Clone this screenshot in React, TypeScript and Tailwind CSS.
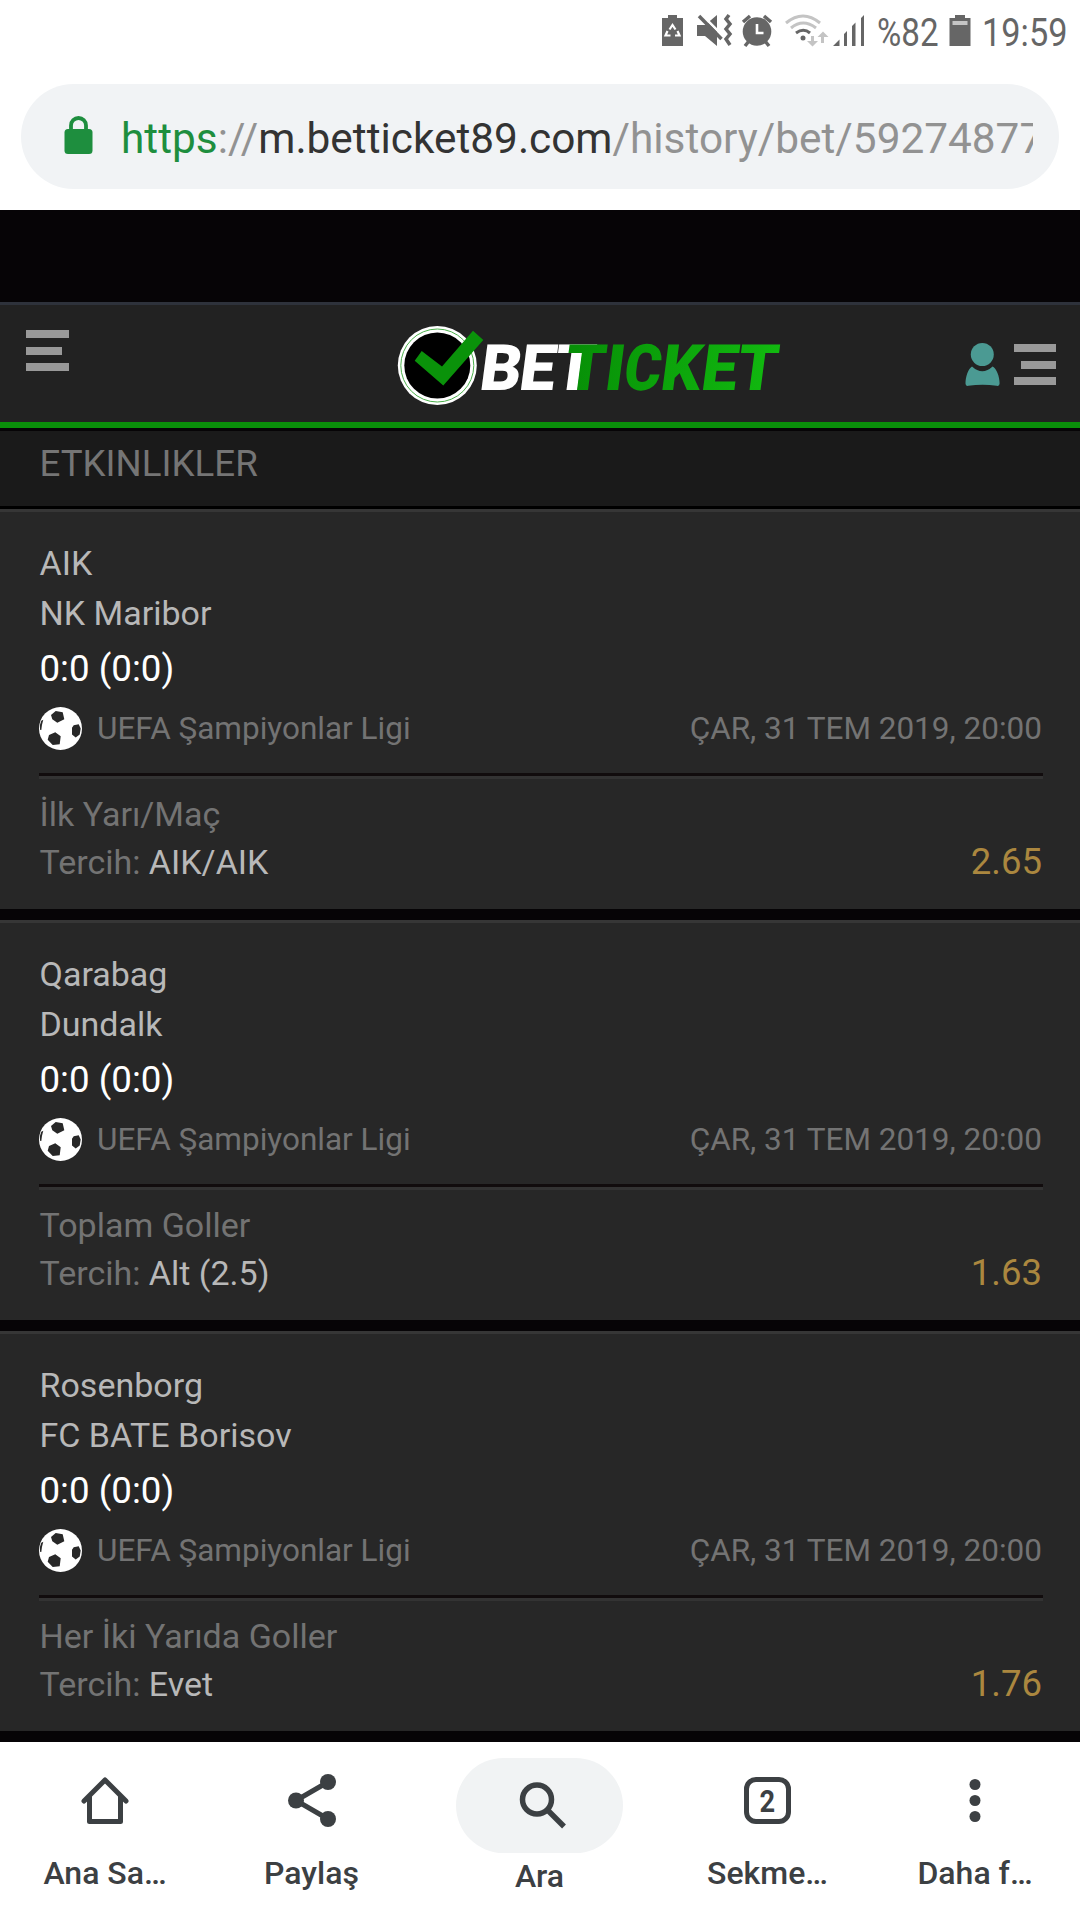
import type { ReactNode } from "react"

type Bet = {
  home: string
  away: string
  score: string
  market: string
  pick: string
  odds: string
}

const bets: Bet[] = [
  { home: "AIK", away: "NK Maribor", score: "0:0 (0:0)", market: "İlk Yarı/Maç", pick: "AIK/AIK", odds: "2.65" },
  { home: "Qarabag", away: "Dundalk", score: "0:0 (0:0)", market: "Toplam Goller", pick: "Alt (2.5)", odds: "1.63" },
  { home: "Rosenborg", away: "FC BATE Borisov", score: "0:0 (0:0)", market: "Her İki Yarıda Goller", pick: "Evet", odds: "1.76" },
]

const StatusBar = () => (
  <div className="flex h-[84px] items-start bg-white pl-[656px] text-[#666666]">
    <svg width="224" height="60" viewBox="656 0 224 60" className="shrink-0" fill="#666">
      {/* battery saver */}
      <path d="M668 15h9v3h6v28h-21V18h6z" />
      <path d="M669.500 29.500l3-4.500 3 4.500M677.500 31l2 4.500H675M670.500 35.500h-5l2-4.500" fill="none" stroke="#fff" strokeWidth="2.200" />
      {/* muted + vibrate */}
      <path d="M697 25h8l12-10v31l-12-10h-8z" />
      <path d="M702 15l22 22" stroke="#fff" strokeWidth="2.500" />
      <path d="M699 16l22.500 23" stroke="#666" strokeWidth="3.500" />
      <path d="M729 15l-3 4 4 5-4 5 4 5-4 5 4 6" fill="none" stroke="#666" strokeWidth="3.500" />
      {/* alarm */}
      <circle cx="757" cy="31.500" r="14.300" />
      <path d="M743 22l7-6M771 22l-7-6M745 46l4-5M769 46l-4-5" stroke="#666" strokeWidth="3.500" />
      <path d="M757 24v9h6.500" fill="none" stroke="#fff" strokeWidth="2.600" />
      {/* wifi */}
      <g fill="none" strokeWidth="3">
        <path d="M786 23q17-14 34 0" stroke="#c4c4c4" />
        <path d="M791 28q12-10 25 0" stroke="#c4c4c4" />
        <path d="M796 33q7.500-5.500 14 0" stroke="#666" />
      </g>
      <circle cx="803" cy="38" r="2.500" />
      <path d="M811 36h3v5h4l-5.500 5.500L807 41h4zM821 43v-6h-3.500l5.500-5.500 5.500 5.500H824v6z" fill="#c4c4c4" />
      {/* signal */}
      <path d="M833 46l6.500-6.500V46zM844 46V34l3-3v15zM852 46V26l3.500-3.500V46zM861 46V18l3-3v31z" />
    </svg>
    <span className="ml-[-3px] mt-[10px] w-[61px] origin-left scale-x-[.85] whitespace-nowrap text-[39px] leading-[46px]">%82</span>
    <svg width="22" height="60" viewBox="0 0 22 60" className="ml-[11px] shrink-0">
      <path d="M6 15h10v3h5.500v28H.5V18H6z" fill="#666" />
      <path d="M3.500 21h15v4h-15z" fill="#c4c4c4" />
    </svg>
    <span className="ml-[11px] mt-[10px] w-[84px] origin-left scale-x-[.88] whitespace-nowrap text-[39px] leading-[46px]">19:59</span>
  </div>
)

const AddressBar = () => (
  <div className="h-[126px] bg-white px-[21px]">
    <div className="flex h-[105px] items-center rounded-full bg-[#f1f3f5] pl-[43px] pr-[26px]">
      <svg width="30" height="40" viewBox="0 0 30 40" className="mb-[2px] shrink-0">
        <path d="M7 15V9.500a7.500 7.500 0 0 1 15 0V15" fill="none" stroke="#1e8e3e" strokeWidth="3.800" />
        <rect x=".5" y="13" width="28" height="25" rx="3.500" fill="#1e8e3e" />
      </svg>
      <div className="ml-[27px] flex-1 overflow-hidden whitespace-nowrap pt-[4px] text-[42.350px] leading-[56px] text-[#929292]">
        <span className="text-[#1e8e3e]">https</span>://
        <span className="text-[#333333]">m.betticket89.com</span>/history/bet/59274877
      </div>
    </div>
  </div>
)

const Logo = () => (
  <svg width="400" height="84" viewBox="0 0 400 84">
    <defs>
      <linearGradient id="ticket" gradientUnits="userSpaceOnUse" x1="176" y1="0" x2="386" y2="0">
        <stop offset="0" stopColor="#079007" />
        <stop offset="1" stopColor="#12bb10" />
      </linearGradient>
    </defs>
    <circle cx="43.300" cy="42.500" r="39.500" fill="#fff" />
    <circle cx="43.300" cy="42.500" r="36.500" fill="none" stroke="#4cb04c" />
    <circle cx="43.300" cy="42.500" r="33" fill="#000" />
    <path d="M27.700 28l-7 9.700L49.300 62.500 89.300 17 79 7.700 48 43.500z" fill="#0a920a" />
    <g transform="translate(0 67) skewX(-7.500)" fontSize="64" fontWeight="900">
      <text x="84 123.500 158" fill="#fff">BET</text>
      <g fill="url(#ticket)">
        <text x="168.500 209">TI</text>
        <text x="228" textLength="37" lengthAdjust="spacingAndGlyphs">C</text>
        <text x="265" textLength="40" lengthAdjust="spacingAndGlyphs">K</text>
        <text x="305.500 341">ET</text>
      </g>
    </g>
  </svg>
)

const MenuBars = ({ right = false }: { right?: boolean }) => (
  <div className={right ? "flex flex-col items-end gap-[8.500px]" : "flex flex-col gap-[8.500px]"}>
    <div className="h-[8px] w-[42.500px] bg-[#999999]" />
    <div className="h-[8px] w-[35.500px] bg-[#999999]" />
    <div className="h-[8px] w-[42.500px] bg-[#999999]" />
  </div>
)

const Header = () => (
  <header className="flex h-[126px] items-start justify-between border-t-[3px] border-b-[6px] border-t-[#2e323b] border-b-[#0a8f0a] bg-[#222222] pl-[26px] pr-[24px]">
    <div className="w-[368px] pt-[25px]">
      <MenuBars />
    </div>
    <div className="pt-[18px]">
      <Logo />
    </div>
    <div className="flex flex-1 justify-end gap-[14px] pt-[38px]">
      <svg width="35" height="44" viewBox="0 0 35 44" fill="#4b9a93">
        <circle cx="17.300" cy="11.500" r="11.500" />
        <path d="M7 23.500q10.300 9.500 20.600 0c4 2 7 10 7 17q0 3-3 2.300-14-2-28.300 0Q.5 43.500.5 40.500C.5 34 3 26 7 23.500z" />
      </svg>
      <div className="pt-[1px]">
        <MenuBars right />
      </div>
    </div>
  </header>
)

const Ball = () => (
  <svg width="43" height="43" viewBox="0 0 43 43" className="shrink-0">
    <circle cx="21.500" cy="21.500" r="21.500" fill="#fff" />
    <path
      d="M12 8l4.700-4 7 1.200 1.600 7-7 3.600-5-3.600zM10 28l6.300-2.700 5.400 4-1 8-7 .7-5-5.300zM34.700 18.200l5-1 2 4.300-1 6-4 3-3.700-3v-6.700zM2.300 13.700l2-1-1.300 5-.7 5.300-1.300-.3v-5z"
      fill="#282828"
    />
  </svg>
)

const BetCard = ({ bet }: { bet: Bet }) => (
  <article className="h-[411px] border-t-[3px] border-b-[11px] border-t-[#363636] border-b-[#060406] bg-[#272727] pt-[26px] pr-[37px] pl-[39px]">
    <div className="pl-[.5px] text-[34px] leading-[50px] text-[#b8b8b8]">
      <div>{bet.home}</div>
      <div>{bet.away}</div>
    </div>
    <div className="mt-[5px] pl-[.5px] text-[36.700px] leading-[52px] text-white">{bet.score}</div>
    <div className="mt-[12px] flex h-[43px] items-center text-[31.500px] text-[#737373]">
      <Ball />
      <span className="ml-[15px] flex-1 pt-[1px]">UEFA Şampiyonlar Ligi</span>
      <span className="pt-[1px] pr-[1px]">ÇAR, 31 TEM 2019, 20:00</span>
    </div>
    <div className="mt-[23px] h-[6px] border-t-[3px] border-t-[#110c0d] bg-[#333333]" />
    <div className="mt-[11px] pr-[1px] pl-[.5px] text-[34px] leading-[48px] text-[#737373]">
      <div>{bet.market}</div>
      <div className="flex justify-between">
        <span>
          Tercih: <span className="text-[#b8b8b8]">{bet.pick}</span>
        </span>
        <span className="text-[36.500px] text-[#ab873f]">{bet.odds}</span>
      </div>
    </div>
  </article>
)

type NavItemProps = {
  label: string
  className: string
  children: ReactNode
}

const NavItem = ({ label, className, children }: NavItemProps) => (
  <div className={`flex flex-col items-center ${className}`}>
    {children}
    <span className="whitespace-nowrap text-[32px] leading-[38px] font-medium">{label}</span>
  </div>
)

const BottomNav = () => (
  <nav className="flex h-[178px] bg-white pl-[1px] text-[#3c4043]">
    <NavItem label="Ana Sa…" className="w-[208px] pt-[30px]">
      <svg width="60" height="60" viewBox="0 0 60 60" className="mb-[22px]" fill="none" stroke="#3c4043" strokeWidth="5" strokeLinecap="round" strokeLinejoin="round">
        <path d="M9 29L30 8l21 21M14.500 25v24.500h31V25" />
      </svg>
    </NavItem>
    <NavItem label="Paylaş" className="w-[205px] pt-[30px]">
      <svg width="60" height="60" viewBox="0 0 60 60" className="mb-[22px]" fill="#3c4043">
        <path d="M46 10L14 28.500 46 47" fill="none" stroke="#3c4043" strokeWidth="5" />
        <circle cx="46" cy="10" r="8" />
        <circle cx="14" cy="28.500" r="8" />
        <circle cx="46" cy="47" r="8" />
      </svg>
    </NavItem>
    <NavItem label="Ara" className="w-[251px] pt-[16px]">
      <div className="mb-[4px] flex h-[95px] w-[167px] items-center justify-center rounded-full bg-[#f1f3f4] pl-[4px]">
        <svg width="60" height="60" viewBox="0 0 60 60" fill="none" stroke="#3c4043" strokeWidth="5.500">
          <circle cx="25" cy="23.500" r="14.500" />
          <path d="M35.500 34L52 50.500" />
        </svg>
      </div>
    </NavItem>
    <NavItem label="Sekme…" className="w-[205px] pt-[35px]">
      <div className="mb-[30px] flex h-[47px] w-[47px] items-center justify-center rounded-[12px] border-[5px] border-[#3c4043]">
        <span className="scale-x-[.85] text-[32px] leading-none font-bold">2</span>
      </div>
    </NavItem>
    <NavItem label="Daha f…" className="w-[210px] pt-[30px]">
      <svg width="60" height="60" viewBox="0 0 60 60" className="mb-[22px]" fill="#3c4043">
        <circle cx="30" cy="12.500" r="5.500" />
        <circle cx="30" cy="28.500" r="5.500" />
        <circle cx="30" cy="44.500" r="5.500" />
      </svg>
    </NavItem>
  </nav>
)

const App = () => {
  return (
    <div className="flex h-[1920px] w-[1080px] flex-col overflow-hidden bg-[#060406] font-[Roboto,sans-serif]">
      <StatusBar />
      <AddressBar />
      <div className="h-[92px]" />
      <Header />
      <div className="mt-[3px] h-[78px] border-b-[3px] border-black bg-[#1a1a1a] pl-[39.500px] pt-[11px] text-[36.700px] leading-[44px] text-[#757575]">
        ETKINLIKLER
      </div>
      <main className="h-[1233px]">
        {bets.map((bet) => (
          <BetCard key={bet.home} bet={bet} />
        ))}
      </main>
      <BottomNav />
    </div>
  )
}

export default App
